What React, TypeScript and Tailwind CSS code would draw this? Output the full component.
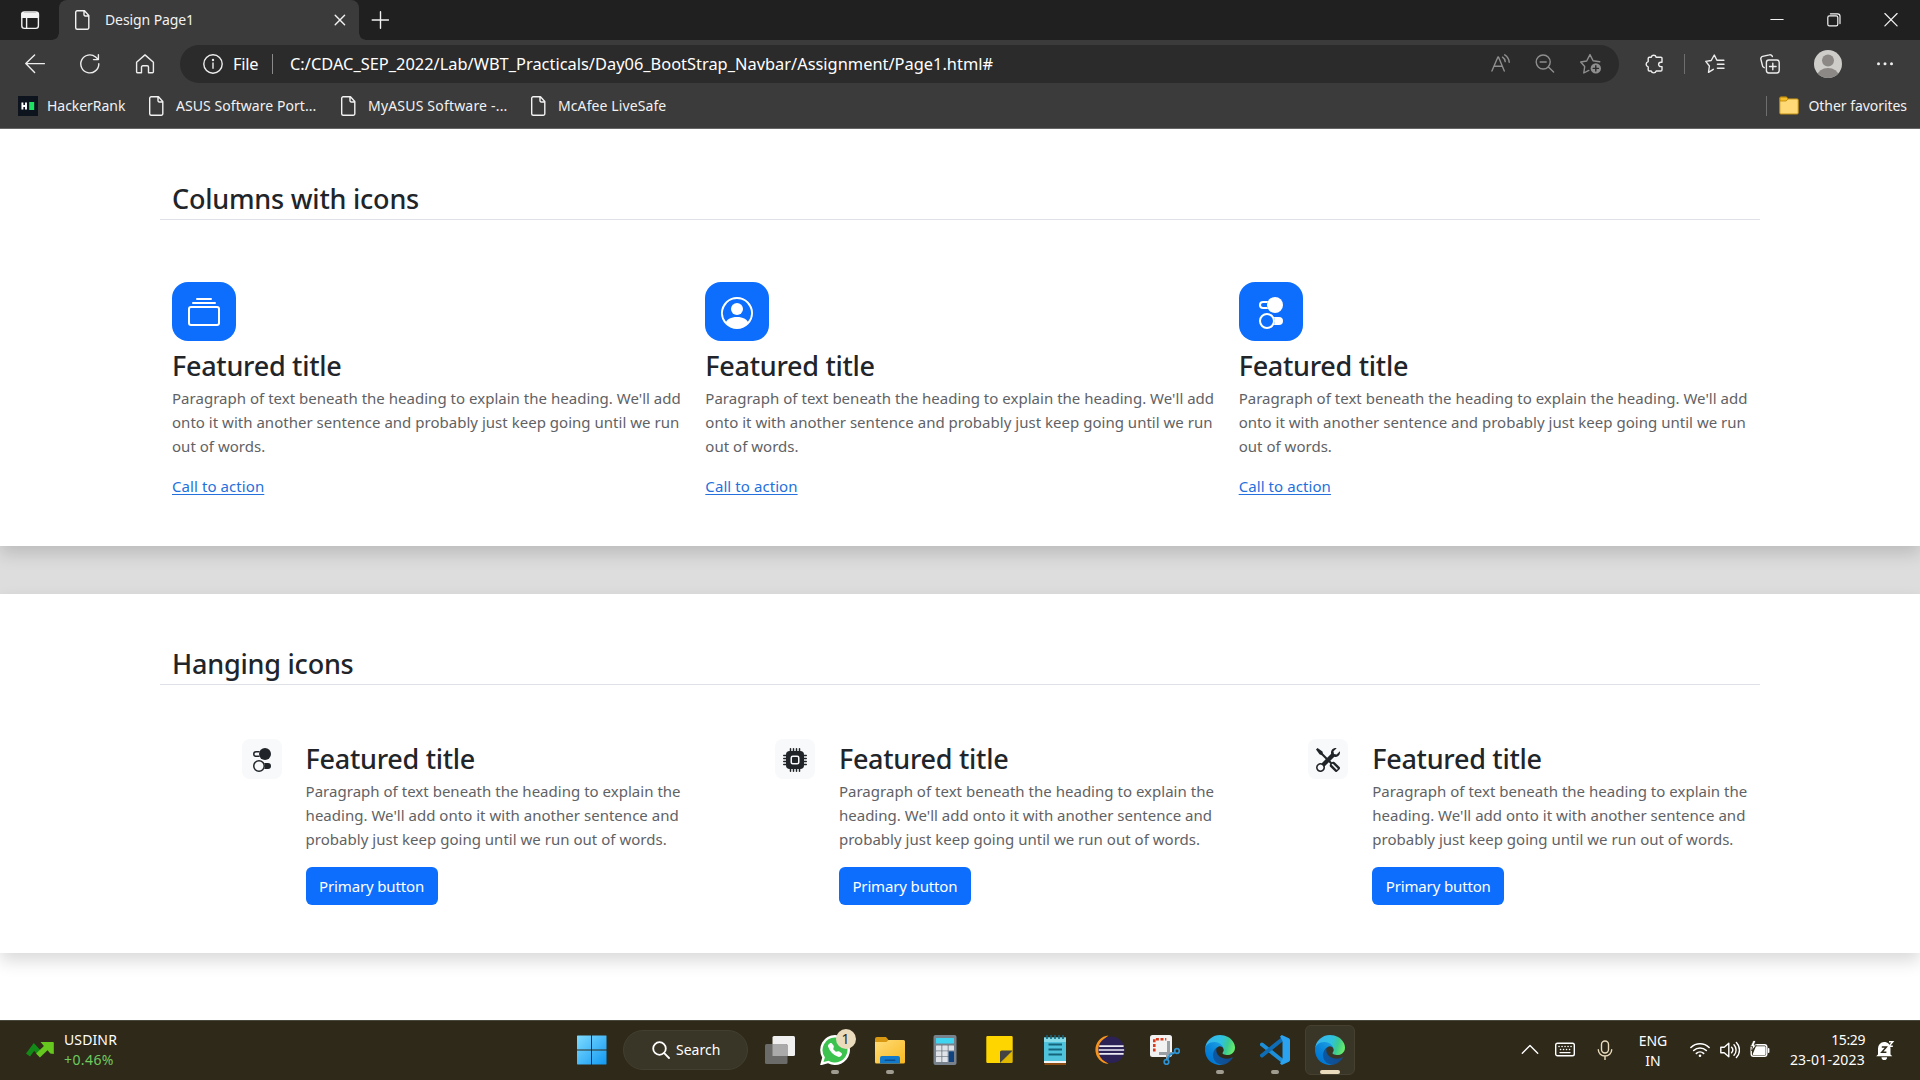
import type { ReactNode } from 'react';
import { BsCollection, BsPersonCircle, BsToggles2, BsCpuFill, BsTools, BsTelephoneFill } from 'react-icons/bs';

/* ---------- shared ---------- */

type IconProps = { className?: string; box?: string; children: ReactNode };

function Line({ className = 'size-5', box = '0 0 20 20', children }: IconProps) {
  return (
    <svg
      viewBox={box}
      className={`${className} block shrink-0`}
      fill="none"
      stroke="currentColor"
      strokeWidth={1.4}
      strokeLinecap="round"
      strokeLinejoin="round"
    >
      {children}
    </svg>
  );
}

function PageIcon() {
  return (
    <Line>
      <path d="M4.5.8h7l4.3 4.6v12.3a1.5 1.5 0 0 1-1.5 1.5H4.2a1.5 1.5 0 0 1-1.5-1.5V2.3A1.5 1.5 0 0 1 4.2.8zM11 1v3.6A1.3 1.3 0 0 0 12.3 6h3.3" />
    </Line>
  );
}

/* ---------- browser chrome ---------- */

function TabStrip() {
  return (
    <div className="flex h-10 items-center bg-[#202020] text-[#f2f2f2]">
      <Line className="ml-5 size-5">
        <rect x="1.8" y="2" width="16.6" height="16.4" rx="2.6" />
        <path d="M2 3.4h16.4v3.8H2z" fill="currentColor" />
        <path d="M6.6 7v11" />
      </Line>
      <div className="relative ml-[19px] flex h-10 w-[300px] items-center rounded-t-lg bg-[#3b3b3b] pr-[13px] pl-[14px]">
        <span className="absolute bottom-0 -left-1.5 size-1.5 bg-[radial-gradient(circle_at_0_0,#202020_5px,#3b3b3b_6px)]" />
        <span className="absolute -right-1.5 bottom-0 size-1.5 bg-[radial-gradient(circle_at_100%_0,#202020_5px,#3b3b3b_6px)]" />
        <PageIcon />
        <span className="ml-3 pb-[2px] text-[14px] tracking-[-0.1px]">Design Page1</span>
        <Line className="ml-auto size-3" box="0 0 12 12">
          <path d="M1.2 1.2l9.4 9.6M10.6 1.2L1.2 10.8" />
        </Line>
      </div>
      <Line className="ml-3 size-[18px]" box="0 0 18 18">
        <path d="M9.5.8v16.4M1.2 9h16.4" />
      </Line>
      <div className="mr-[22px] ml-auto flex items-center gap-[43px]">
        <Line className="size-[14px]" box="0 0 14 14">
          <path d="M.8 6.5h12.400" strokeWidth={1} />
        </Line>
        <Line className="size-[14px]" box="0 0 14 14">
          <rect x=".8" y="2.8" width="10" height="10" rx="1.6" strokeWidth={1.2} />
          <path d="M3.4.8h7.2a2.4 2.4 0 0 1 2.4 2.4v7.4" strokeWidth={1.2} />
        </Line>
        <Line className="size-[14px]" box="0 0 14 14">
          <path d="M.9.5l12.2 12.4M13.1.5L.9 12.9" strokeWidth={1.2} />
        </Line>
      </div>
    </div>
  );
}

function AddressBar() {
  return (
    <div className="flex h-12 items-center bg-[#3b3b3b] text-[#ededed]">
      <Line className="ml-[25px] size-5">
        <path d="M19.4 9.6H.9M9.6 1L.8 9.6l8.8 8.8" />
      </Line>
      <Line className="ml-[35px] size-5">
        <path d="M18.8 9.8A9 9 0 1 1 15.6 3l2.4 2.2M18.4.8v4.8h-4.9" />
      </Line>
      <Line className="ml-[35px] size-5">
        <path d="M1.6 8.3L10 .9l8.4 7.4v9.4a1 1 0 0 1-1 1h-3.9v-5.6a1.3 1.3 0 0 0-1.3-1.3H7.8a1.3 1.3 0 0 0-1.3 1.3v5.6H2.6a1 1 0 0 1-1-1z" />
      </Line>
      <div className="ml-[25px] flex h-[38px] w-[1439px] items-center rounded-full bg-[#2b2b2b] pr-[17px] pl-[23px] text-[16.4px] leading-6">
        <Line>
          <circle cx="10" cy="10" r="9.2" />
          <path d="M10 9v5.2" />
          <circle cx="10" cy="6" r=".5" fill="currentColor" />
        </Line>
        <span className="ml-[10px] w-[39px] pb-px tracking-[-0.2px] text-white">File</span>
        <span className="h-5 w-px bg-[#8a8a8a]" />
        <span className="ml-[17px] pb-px tracking-[0.01px] whitespace-nowrap text-white">
          C:/CDAC_SEP_2022/Lab/WBT_Practicals/Day06_BootStrap_Navbar/Assignment/Page1.html#
        </span>
        <div className="ml-auto flex items-center gap-[25px] text-[#8f8f8f]">
          <Line>
            <path d="M1.9 17L7.900 3h.6l5.800 14M4.100 12.200h8M12.500 3.200c1.600 1 2.500 2.400 2.700 4.400M14.700.8c2.800 1.800 4.300 4.300 4.500 7.400" />
          </Line>
          <Line>
            <circle cx="8.2" cy="8" r="7" />
            <path d="M13.4 13l5.200 5M5.200 8h6" />
          </Line>
          <Line className="h-[22px] w-[22px]" box="0 0 22 22">
            <path d="M8.8 17.400l-5 2.600.9-6.500-4-4.500 6-1L10 1.600l3.100 6.200 6.600 1" />
            <circle cx="15.8" cy="15.4" r="5.2" fill="currentColor" stroke="none" />
            <path d="M15.800 12.800V18M13.200 15.400h5.200" stroke="#2b2b2b" strokeWidth={1.4} />
          </Line>
        </div>
      </div>
      <Line className="ml-[25px] size-5">
        <path d="M5.4 3.200h1.800a2.600 2.600 0 0 1 5 0h4.600a1.200 1.200 0 0 1 1.200 1.200v3.800h-1.200a2.200 2.200 0 0 0 0 4.400H18v3.200a1.200 1.200 0 0 1-1.200 1.200h-4.600a2.600 2.600 0 0 1-5 0H5.400a1.200 1.200 0 0 1-1.200-1.200v-2.800a2.800 2.800 0 0 1 0-5.400V4.400a1.200 1.200 0 0 1 1.200-1.200z" />
      </Line>
      <span className="ml-5 h-5 w-px bg-[#6e6e6e]" />
      <Line className="ml-5 size-5">
        <path d="M8.300 15.300l-4.800 3 .9-6.300L.8 7.400l5.400-.9L9.300 1l2.600 5.300h7M12.400 10.200h6.600M12.400 14.300h6.600" />
      </Line>
      <Line className="ml-[35px] size-5">
        <rect x="6.4" y="6" width="12.8" height="13" rx="2.4" />
        <path d="M12.800 9.200v6.600M9.500 12.500h6.600M4.200 13.700A3 3 0 0 1 2.300 11L.9 5.400a2.400 2.400 0 0 1 1.700-3L9.400.9a2.400 2.400 0 0 1 3 1.600" />
      </Line>
      <svg viewBox="0 0 28 28" className="ml-[34px] size-7 shrink-0">
        <clipPath id="avatar">
          <circle cx="14" cy="14" r="14" />
        </clipPath>
        <g clipPath="url(#avatar)">
          <path d="M0 0h28v28H0z" fill="#cfcdca" />
          <circle cx="14" cy="10.5" r="6" fill="#8b8886" />
          <ellipse cx="14" cy="25.5" rx="10.5" ry="7.5" fill="#8b8886" />
        </g>
      </svg>
      <svg viewBox="0 0 20 20" className="ml-[33px] size-5 shrink-0" fill="currentColor">
        <circle cx="3.5" cy="9.8" r="1.5" />
        <circle cx="10" cy="9.8" r="1.5" />
        <circle cx="16.5" cy="9.8" r="1.5" />
      </svg>
    </div>
  );
}

function Bookmark({ label, className }: { label: string; className: string }) {
  return (
    <div className={`${className} flex items-center gap-2`}>
      <PageIcon />
      <span className="pb-px pl-px whitespace-nowrap">{label}</span>
    </div>
  );
}

function BookmarksBar() {
  return (
    <div className="flex h-[41px] items-center border-b border-[#666] bg-[#3b3b3b] pb-1 text-[14px] leading-5 text-[#f2f2f2]">
      <div className="ml-[18px] flex w-[129px] items-center">
        <svg viewBox="0 0 20 20" className="size-5 shrink-0">
          <path d="M0 0h20v20H0z" fill="#0e141e" />
          <path d="M4.4 6.500v7M8 6.500v7M4.400 10H8" stroke="#fff" strokeWidth="1.900" />
          <path d="M11.200 6h5v8h-5z" fill="#1ee062" />
        </svg>
        <span className="ml-[9px] pb-px tracking-[-0.04px]">HackerRank</span>
      </div>
      <Bookmark label="ASUS Software Port..." className="w-[192px] tracking-[0.06px]" />
      <Bookmark label="MyASUS Software -..." className="w-[190px] tracking-[0.19px]" />
      <Bookmark label="McAfee LiveSafe" className="tracking-[0.1px]" />
      <span className="ml-auto h-5 w-px bg-[#6e6e6e]" />
      <svg viewBox="0 0 20 20" className="ml-3 size-5 shrink-0">
        <path d="M.8 2a1 1 0 0 1 1-1h5.500l2 1.900h8.900a1 1 0 0 1 1 1V17a1 1 0 0 1-1 1H1.800a1 1 0 0 1-1-1z" fill="#ffd976" stroke="#c18f12" strokeWidth="1" />
        <path d="M1 5V2l.8-.8h5.400l1.800 1.700L7.200 5z" fill="#f5bd27" stroke="#b98508" strokeWidth=".8" />
      </svg>
      <span className="mr-[13px] ml-[9px] pb-px tracking-[-0.05px]">Other favorites</span>
    </div>
  );
}

/* ---------- page content ---------- */

function SectionHeading({ children }: { children: ReactNode }) {
  return (
    <h2 className="h-[37px] border-b border-[#dee2e6] pl-3 text-[27px] leading-8 font-medium tracking-[-0.22px]">
      {children}
    </h2>
  );
}

function FeatureColumn({ icon }: { icon: ReactNode }) {
  return (
    <div className="px-3">
      <div className="flex h-[59px] w-16 items-center justify-center rounded-2xl bg-[#0d6efd] pt-[3px] text-[32px] text-white">
        {icon}
      </div>
      <h3 className="mt-[9px] h-9 text-[27px] leading-8 font-medium tracking-[-0.28px]">Featured title</h3>
      <p className="text-[15px] leading-6 tracking-[0.02px] whitespace-nowrap text-[#5f6265]">
        Paragraph of text beneath the heading to explain the heading. We'll add
        <br />
        onto it with another sentence and probably just keep going until we run
        <br />
        out of words.
      </p>
      <a
        href="#"
        className="mt-4 inline-block h-6 text-[15px] leading-6 tracking-[0.08px] text-[#2470dc] underline decoration-1 underline-offset-[2px]"
      >
        Call to action
      </a>
    </div>
  );
}

function HangingFeature({ icon }: { icon: ReactNode }) {
  return (
    <div className="flex items-start pl-[81.6px]">
      <div className="flex size-10 shrink-0 items-center justify-center rounded-lg bg-[#f8f9fa] pt-[2px] text-[24px]">
        {icon}
      </div>
      <div className="mt-1 ml-6">
        <h3 className="h-9 text-[27px] leading-8 font-medium tracking-[-0.28px]">Featured title</h3>
        <p className="text-[15px] leading-6 tracking-[0.02px] whitespace-nowrap text-[#5f6265]">
          Paragraph of text beneath the heading to explain the
          <br />
          heading. We'll add onto it with another sentence and
          <br />
          probably just keep going until we run out of words.
        </p>
        <button className="mt-4 block h-[38px] w-[132px] rounded-md bg-[#0d6efd] text-[15px] tracking-[-0.14px] text-white">
          Primary button
        </button>
      </div>
    </div>
  );
}

function Page() {
  return (
    <main className="h-[891px] overflow-hidden bg-white text-[#212529]">
      <section className="h-[417px] bg-white px-40 pt-[54px] shadow-[0_8px_16px_rgba(0,0,0,0.15)]">
        <SectionHeading>Columns with icons</SectionHeading>
        <div className="mt-[62px] grid grid-cols-3">
          <FeatureColumn icon={<BsCollection />} />
          <FeatureColumn icon={<BsPersonCircle />} />
          <FeatureColumn icon={<BsToggles2 />} />
        </div>
      </section>
      <div className="h-12 bg-black/[0.135]" />
      <section className="h-[359px] bg-white px-40 pt-[54px] shadow-[0_8px_16px_rgba(0,0,0,0.15)]">
        <SectionHeading>Hanging icons</SectionHeading>
        <div className="mt-[54px] grid grid-cols-3">
          <HangingFeature icon={<BsToggles2 />} />
          <HangingFeature icon={<BsCpuFill />} />
          <HangingFeature icon={<BsTools />} />
        </div>
      </section>
    </main>
  );
}

/* ---------- taskbar ---------- */

function TaskViewIcon() {
  return (
    <svg viewBox="0 0 30 30" className="size-[30px]">
      <path d="M9 1h19.500a1.500 1.500 0 0 1 1.500 1.500v17a1.500 1.500 0 0 1-1.500 1.500H7.500V2.500A1.500 1.500 0 0 1 9 1z" fill="#f0f0f0" />
      <rect x="0" y="9" width="22.5" height="20" rx="1.5" fill="#6b6b69" />
      <path d="M7.500 9H21a1.500 1.500 0 0 1 1.500 1.500V21h-15z" fill="#aaa" />
    </svg>
  );
}

function WhatsAppIcon() {
  return (
    <span className="relative block size-[30px]">
      <svg viewBox="0 0 30 30" className="size-[30px]">
        <path d="M15 0a15 15 0 1 1-7 28.300L0 30.500l2.200-8A15 15 0 0 1 15 0z" fill="#fff" />
        <path d="M15 2.500a12.500 12.500 0 1 1-6.500 23.200L3.500 27l1.400-4.800A12.500 12.500 0 0 1 15 2.500z" fill="#3cc34f" />
      </svg>
      <BsTelephoneFill className="absolute top-2 left-2 size-[14px] text-white" />
      <span className="absolute -top-1.5 left-4 flex size-5 items-center justify-center rounded-full bg-[#eadbbd] text-[14px] leading-5 text-[#2e2919]">
        1
      </span>
    </span>
  );
}

function FolderIcon() {
  return (
    <svg viewBox="0 0 30 30" className="size-[30px]">
      <defs>
        <linearGradient id="folder" x1="0" y1="0" x2="1" y2="1">
          <stop offset="0" stopColor="#ffdc78" />
          <stop offset="1" stopColor="#f9b820" />
        </linearGradient>
      </defs>
      <path d="M0 4a2 2 0 0 1 2-2h9l2.500 3H20v6H0z" fill="#d99811" />
      <path d="M0 7h11.500l2-2h15A1.500 1.500 0 0 1 30 6.500V27a1.500 1.500 0 0 1-1.500 1.500h-27A1.500 1.500 0 0 1 0 27z" fill="url(#folder)" />
      <path d="M5 28.500V23a2 2 0 0 1 2-2h16a2 2 0 0 1 2 2v5.500z" fill="#1379cb" />
      <rect x="9.5" y="24.5" width="11" height="1.5" rx=".7" fill="#0b4f8f" />
    </svg>
  );
}

function CalculatorIcon() {
  return (
    <svg viewBox="0 0 30 30" className="size-[30px]">
      <rect x="3.5" y="0" width="23" height="30" rx="2" fill="#78828c" />
      <rect x="6" y="3" width="18" height="5.5" rx=".6" fill="#3fd5f0" />
      {[10.5, 16.3, 22.1].map((y) =>
        [6, 12.3, 18.6].map((x) => (
          <rect key={`${x}-${y}`} x={x} y={y} width="5.4" height="5" rx=".5" fill="#dfe3e7" />
        )),
      )}
      <rect x="18.600" y="16.300" width="5.4" height="10.8" rx=".5" fill="#10427e" />
    </svg>
  );
}

function StickyNotesIcon() {
  return (
    <svg viewBox="0 0 30 30" className="size-[30px]">
      <path d="M2.500 1h24A1.200 1.200 0 0 1 27.700 2.200V16L16 28H2.500a1.200 1.200 0 0 1-1.200-1.200V2.200A1.200 1.200 0 0 1 2.500 1z" fill="#ffd500" />
      <path d="M27.700 15.500v11.300a1.200 1.200 0 0 1-1.200 1.200H15.500z" fill="#e0b800" />
      <path d="M27.700 15.500L15 28V17a1.500 1.500 0 0 1 1.500-1.500z" fill="#434343" />
    </svg>
  );
}

function NotepadIcon() {
  return (
    <svg viewBox="0 0 30 30" className="size-[30px]">
      <path d="M4.500 27.500H26V30H4.500z" fill="#8a4c13" />
      <path d="M4 25h22v3H4z" fill="#f4f4f4" />
      <path d="M4 2.500h22V26H4z" fill="#4fc3dc" />
      <path d="M4 2.500h22V7H4z" fill="#86dbe9" />
      <path d="M7 0v4M11 0v4M15 0v4M19 0v4M23 0v4" stroke="#16647c" strokeWidth="1.6" />
      <path d="M8.500 9.500H22M8.500 14.500H22M8.500 19.500H22" stroke="#16647c" strokeWidth="1.8" />
    </svg>
  );
}

function EclipseIcon() {
  return (
    <svg viewBox="0 0 30 30" className="size-[30px]">
      <path d="M13.500.5A14.300 14.300 0 0 0 13.500 29 17 17 0 0 1 13.500.5z" fill="#f7941e" />
      <circle cx="16.4" cy="14.8" r="13.2" fill="#2c2255" />
      <path d="M4.200 11.200h24.400M3.700 15h25.400M4.200 18.800h24.400" stroke="#ecebf3" strokeWidth="1.700" />
    </svg>
  );
}

function SnippingIcon() {
  return (
    <svg viewBox="0 0 30 30" className="size-[30px]">
      <rect x="0" y="0" width="22" height="22" rx="2.5" fill="#f2f2f2" />
      <path d="M4.300 16.500V4.300h12" fill="none" stroke="#d93b1c" strokeWidth="2.6" strokeDasharray="3 1.6" />
      <path d="M18.500 6v12.500H9" fill="none" stroke="#999fa5" strokeWidth="3" />
      <path d="M17 24.500V18h7" fill="none" stroke="#999fa5" strokeWidth="2" />
      <circle cx="16.5" cy="27" r="2.3" fill="none" stroke="#2b93d6" strokeWidth="1.7" />
      <circle cx="27" cy="16" r="2.3" fill="none" stroke="#2b93d6" strokeWidth="1.7" />
      <path d="M17.200 24.600l2.600-4.800 5.200-2.400" fill="none" stroke="#2b93d6" strokeWidth="2" />
    </svg>
  );
}

function EdgeIcon({ id }: { id: string }) {
  return (
    <svg viewBox="0 0 256 256" className="size-[30px]">
      <defs>
        <linearGradient id={`${id}-a`} x1="60" y1="177" x2="241" y2="177" gradientUnits="userSpaceOnUse">
          <stop offset="0" stopColor="#0c59a4" />
          <stop offset="1" stopColor="#114a8b" />
        </linearGradient>
        <linearGradient id={`${id}-b`} x1="157" y1="100" x2="46" y2="221" gradientUnits="userSpaceOnUse">
          <stop offset="0" stopColor="#1b9de2" />
          <stop offset=".16" stopColor="#1595df" />
          <stop offset=".67" stopColor="#0680d7" />
          <stop offset="1" stopColor="#0078d4" />
        </linearGradient>
        <linearGradient id={`${id}-c`} x1="20" y1="60" x2="240" y2="130" gradientUnits="userSpaceOnUse">
          <stop offset="0" stopColor="#35b5ee" />
          <stop offset=".5" stopColor="#2fc2df" />
          <stop offset=".75" stopColor="#3ccb8f" />
          <stop offset="1" stopColor="#66eb6e" />
        </linearGradient>
      </defs>
      <path
        fill={`url(#${id}-a)`}
        d="M231 190.500c-3.400 1.800-6.900 3.400-10.500 4.700a101.500 101.500 0 0 1-35.900 6.500c-47.300 0-88.500-32.500-88.500-74.300 0-11.600 6.300-21.900 16-27.500-42.800 1.800-53.800 46.400-53.800 72.500 0 74 68.100 81.400 82.800 81.400 7.900 0 19.800-2.300 27-4.600l1.300-.4a128.300 128.300 0 0 0 66.600-52.800 4 4 0 0 0-5-5.500z"
      />
      <path
        fill={`url(#${id}-b)`}
        d="M105.700 241.400a79.200 79.200 0 0 1-22.700-21.300 80.700 80.700 0 0 1 29.500-120c3.100-1.500 8.500-4.100 15.600-4a32.400 32.400 0 0 1 25.700 13 31.900 31.900 0 0 1 6.300 18.700c0-.2 24.500-79.600-80-79.600-43.900 0-80 41.600-80 78.200 0 19.400 4.200 38.700 12.100 56a128 128 0 0 0 156.500 67 75.600 75.600 0 0 1-62.800-8z"
      />
      <path
        fill={`url(#${id}-c)`}
        d="M152.300 148.900c-.8 1-3.300 2.500-3.300 5.700 0 2.600 1.700 5.100 4.700 7.200 14.400 10 41.500 8.700 41.600 8.700 10.700 0 21.100-2.900 30.300-8.300a61.400 61.400 0 0 0 30.400-52.900c.3-22.400-8-37.300-11.300-43.900C223.500 23.900 177.700 0 128 0A128 128 0 0 0 0 126.200c.5-36.500 36.800-66 80-66 3.500 0 23.500.3 42 10.100 16.300 8.600 24.900 18.900 30.800 29.200 6.200 10.700 7.300 24.100 7.300 29.500 0 5.300-2.700 13.300-7.900 19.900z"
      />
    </svg>
  );
}

function CodeIcon() {
  return (
    <svg viewBox="0 0 30 30" className="size-[30px]" strokeLinejoin="round">
      <path d="M2 9.500L22 25.500" stroke="#1d8fd8" strokeWidth="4" strokeLinecap="round" />
      <path d="M2 20.500L22 4.500" stroke="#0f6db5" strokeWidth="4" strokeLinecap="round" />
      <path d="M21.800 0l7.100 3.300a1.900 1.900 0 0 1 1.100 1.700v20a1.900 1.900 0 0 1-1.100 1.700L21.800 30l-1.800-1.500L22.500 24V6L20 1.500z" fill="#2ba2ef" />
    </svg>
  );
}

function TaskButton({ children, state }: { children: ReactNode; state?: 'running' | 'active' }) {
  return (
    <div className="flex w-[55px] justify-center">
      <div
        className={
          state === 'active'
            ? 'flex h-[50px] w-[50px] flex-col items-center rounded-md border border-[#454030] bg-[#3a3627] pt-[9px]'
            : 'flex h-[50px] w-[50px] flex-col items-center pt-[10px]'
        }
      >
        {children}
        {state === 'running' && <span className="mt-[5px] h-1 w-2 rounded-full bg-[#a09c92]" />}
        {state === 'active' && <span className="mt-[5px] h-1 w-5 rounded-full bg-[#eadbbd]" />}
      </div>
    </div>
  );
}

function Taskbar() {
  return (
    <footer className="flex h-[60px] items-center border-t border-[#47493c] bg-[#2e2919] pb-px text-[14px] leading-5 text-white">
      <svg viewBox="0 0 28 18" className="ml-[26px] h-[18px] w-7 shrink-0">
        <path d="M2 14l6-8 6.500 7" fill="none" stroke="#138a17" strokeWidth="5" />
        <path d="M12 14.500L23 4" fill="none" stroke="#66c81e" strokeWidth="5.5" />
        <path d="M14.500 1H27a.8.8 0 0 1 .8.8V13l-3.500-.5z" fill="#66c81e" />
      </svg>
      <div className="ml-[10px] w-[513px]">
        <div className="tracking-[0.12px]">USDINR</div>
        <div className="tracking-[0.4px] text-[#6fcb5f]">+0.46%</div>
      </div>
      <svg viewBox="0 0 30 30" className="size-[30px] shrink-0">
        <defs>
          <linearGradient id="win" x1="0" y1="0" x2="1" y2="1">
            <stop offset="0" stopColor="#7fdcff" />
            <stop offset="1" stopColor="#0f97f2" />
          </linearGradient>
          <mask id="panes">
            <path d="M0 .5h14v14H0zM15 .5h14.500v14H15zM0 15.500h14v14H0zM15 15.500h14.500v14H15z" fill="#fff" />
          </mask>
        </defs>
        <rect width="30" height="30" rx="1" fill="url(#win)" mask="url(#panes)" />
      </svg>
      <div className="ml-4 flex h-10 w-[125px] items-center rounded-full border border-[#433f30] bg-[#3a3627] pl-7">
        <Line className="h-[18px] w-[18px]" box="0 0 18 18">
          <circle cx="7.5" cy="7.5" r="6.3" strokeWidth={1.8} />
          <path d="M12.200 12.200l4.800 4.800" strokeWidth={1.8} />
        </Line>
        <span className="ml-[6px]">Search</span>
      </div>
      <div className="ml-[4px] flex">
        <TaskButton><TaskViewIcon /></TaskButton>
        <TaskButton state="running"><WhatsAppIcon /></TaskButton>
        <TaskButton state="running"><FolderIcon /></TaskButton>
        <TaskButton><CalculatorIcon /></TaskButton>
        <TaskButton><StickyNotesIcon /></TaskButton>
        <TaskButton><NotepadIcon /></TaskButton>
        <TaskButton><EclipseIcon /></TaskButton>
        <TaskButton><SnippingIcon /></TaskButton>
        <TaskButton state="running"><EdgeIcon id="edge" /></TaskButton>
        <TaskButton state="running"><CodeIcon /></TaskButton>
        <TaskButton state="active"><EdgeIcon id="edge-active" /></TaskButton>
      </div>
      <div className="ml-auto flex items-center">
        <Line className="size-5">
          <path d="M2.300 13.200L10 5.500l7.700 7.700" />
        </Line>
        <Line className="ml-[15px] size-5">
          <rect x=".7" y="3.2" width="18.6" height="12.6" rx="1.8" />
          <path d="M5 12.600h10" />
          <path d="M4 6.600h.1M7 6.600h.1M10 6.600h.1M13 6.600h.1M16 6.600h.1M5.500 9.500h.1M8.500 9.500h.1M11.500 9.500h.1M14.500 9.500h.1" strokeWidth={1.5} />
        </Line>
        <Line className="ml-5 size-5 text-[#eadbbd]">
          <rect x="6.5" y="1" width="7" height="12" rx="3.5" />
          <path d="M3.300 9.800a6.700 6.200 0 0 0 13.400 0M10 16v3.600" />
        </Line>
        <div className="ml-[19px] w-[38px] pt-[1px] text-center leading-5">
          ENG
          <br />
          IN
        </div>
        <Line className="ml-[18px] size-5">
          <path d="M.9 7.500a13 13 0 0 1 18.200 0M3.700 10.500a9 9 0 0 1 12.600 0M6.400 13.400a5.200 5.200 0 0 1 7.200 0" strokeWidth={1.6} />
          <circle cx="10" cy="15.8" r="1.3" fill="currentColor" stroke="none" />
        </Line>
        <Line className="ml-[10px] size-5">
          <path d="M.8 7.200h3.400l4.600-4v13.600l-4.600-4H.8zM11.600 7.300a4 4 0 0 1 0 5.400M14 4.800a7.500 7.500 0 0 1 0 10.400M16.400 2.400a11 11 0 0 1 0 15.200" />
        </Line>
        <Line className="ml-[10px] size-5">
          <rect x="1.2" y="4.7" width="15.6" height="11.6" rx="2.2" />
          <path d="M3.500 14.200l3-7.200h8.300v7.200zM18.600 8.800v3.400" fill="currentColor" strokeWidth={1.6} />
          <path d="M3 .8L.4 6.600h2.200L1.600 11l4.800-6H4.200L5.800.8z" fill="currentColor" stroke="#2e2919" strokeWidth={0.8} />
        </Line>
        <div className="ml-[15px] w-[80px] text-right">
          <div className="tracking-[-0.4px]">15:29</div>
          <div className="tracking-[0.2px]">23-01-2023</div>
        </div>
        <svg viewBox="0 0 20 20" className="mr-[25px] ml-[10px] size-5">
          <path d="M3 14.500V8.500a6.500 6.500 0 0 1 6-6.500c4 0 6.500 2.500 6.500 6.500v6l1.800 1.800H1.200z" fill="#fff" />
          <path d="M6.500 17.200h5.600a2.800 2.800 0 0 1-5.600 0z" fill="#fff" />
          <path d="M6.800 7h4.600l-4.600 5.200h4.600" fill="none" stroke="#2e2919" strokeWidth="1.5" />
          <path d="M12.500.2h6.800v6.600h-4z" fill="#2e2919" />
          <path d="M14 1.800h3.800L14 6.200h3.800" fill="none" stroke="#fff" strokeWidth="1.4" />
        </svg>
      </div>
    </footer>
  );
}

export default function App() {
  return (
    <div className="h-[1080px] w-[1920px] overflow-hidden font-['Noto_Sans','Open_Sans',sans-serif]">
      <TabStrip />
      <AddressBar />
      <BookmarksBar />
      <Page />
      <Taskbar />
    </div>
  );
}
